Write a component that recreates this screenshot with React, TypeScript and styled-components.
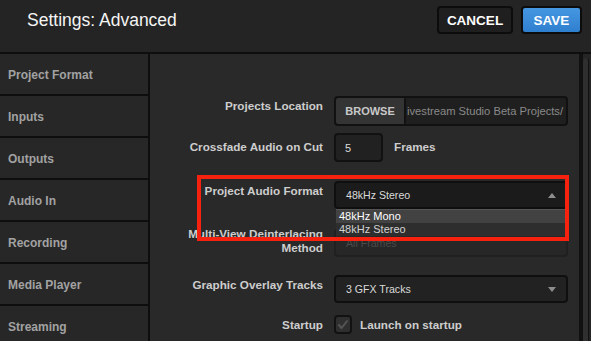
import React from 'react';
import styled, { createGlobalStyle } from 'styled-components';

const Global = createGlobalStyle`
  html, body { margin: 0; padding: 0; background: #282828; }
  body { font-family: "Liberation Sans", Arial, sans-serif; }
  #root { width: 591px; height: 341px; }
`;

const Shell = styled.div`
  position: relative;
  width: 591px;
  height: 341px;
  overflow: hidden;
  background: #282828;
  display: flex;
  flex-direction: column;
`;

const Header = styled.header`
  height: 54px;
  box-sizing: border-box;
  flex-shrink: 0;
  padding: 6px 9px 0 27px;
  background: #242424;
  border-bottom: 2px solid #0e0e0e;
  display: flex;
  align-items: flex-start;
  gap: 8px;
`;

const Title = styled.h1`
  flex: 1;
  margin: 0;
  font-weight: normal;
  font-size: 17.5px;
  line-height: 28px;
  color: #f4f4f4;
`;

const HeaderButton = styled.button<{ $primary?: boolean; $w: number }>`
  width: ${(p) => p.$w}px;
  height: 28px;
  box-sizing: border-box;
  border-radius: 4px;
  border: 2px solid #0c0c0c;
  background: ${(p) => (p.$primary ? 'linear-gradient(#4697e2, #2f7fcf)' : '#1f1f1f')};
  color: #fff;
  font-family: "Liberation Sans", Arial, sans-serif;
  font-weight: bold;
  font-size: 13.5px;
  padding: 0;
`;

const Body = styled.div`
  flex: 1;
  display: flex;
  min-height: 0;
`;

const Sidebar = styled.nav`
  width: 148px;
  flex-shrink: 0;
  border-right: 2px solid #0e0e0e;
  background: #0e0e0e;
  display: flex;
  flex-direction: column;
  gap: 2px;
`;

const NavItem = styled.div`
  height: 40px;
  box-sizing: border-box;
  flex-shrink: 0;
  background: #272727;
  padding: 2px 0 0 8px;
  display: flex;
  align-items: center;
  font-weight: bold;
  font-size: 12px;
  color: #a2a2a2;
`;

const Main = styled.main`
  flex: 1;
  position: relative;
  display: flex;
  flex-direction: column;
  background: #292929;
`;

const Gutter = styled.div`
  width: 8px;
  flex-shrink: 0;
  border-left: 4px solid #111;
  background: #252525;
  padding-top: 4px;
  display: flex;
  justify-content: flex-start;
`;

const Track = styled.div`
  width: 5px;
  height: 100%;
  border-radius: 3px 3px 0 0;
  background: #2f2f2f;
  border-right: 1px solid #111;
`;

const Row = styled.div<{ $mt: number }>`
  display: flex;
  align-items: flex-start;
  gap: 11px;
  margin-top: ${(p) => p.$mt}px;
`;

const Label = styled.div<{ $off: number }>`
  width: 173px;
  flex-shrink: 0;
  text-align: right;
  font-weight: bold;
  font-size: 11.7px;
  line-height: 14px;
  color: #cdcdcd;
  margin-top: ${(p) => p.$off}px;
`;

const BrowseGroup = styled.div`
  width: 234px;
  height: 30px;
  box-sizing: border-box;
  display: flex;
  border: 2px solid #111;
  border-radius: 4px;
  overflow: hidden;
  background: #1f1f1f;
`;

const BrowseButton = styled.div`
  width: 70px;
  flex-shrink: 0;
  box-sizing: border-box;
  border-right: 2px solid #111;
  background: #343434;
  display: flex;
  align-items: center;
  justify-content: center;
  font-weight: bold;
  font-size: 11px;
  color: #c9c9c9;
  border-radius: 2px;
`;

const PathText = styled.div`
  flex: 1;
  overflow: hidden;
  display: flex;
  align-items: center;
  padding-left: 1px;
  white-space: nowrap;
  font-size: 11.2px;
  color: #8a8a8a;
`;

const NumberBox = styled.div`
  width: 49px;
  height: 29px;
  box-sizing: border-box;
  border: 2px solid #111;
  border-radius: 4px;
  background: #212121;
  display: flex;
  align-items: center;
  padding-left: 9px;
  font-size: 11px;
  color: #dcdcdc;
`;

const Unit = styled.div`
  font-weight: bold;
  font-size: 11.7px;
  line-height: 14px;
  color: #cdcdcd;
  margin-top: 7px;
`;

const Select = styled.div<{ $disabled?: boolean; $open?: boolean }>`
  position: relative;
  width: 234px;
  height: 28px;
  box-sizing: border-box;
  border: 2px solid ${(p) => (p.$disabled ? '#202020' : '#0f0f0f')};
  border-radius: 4px;
  background: ${(p) => (p.$open ? '#1b1b1b' : p.$disabled ? '#272727' : '#222')};
  display: flex;
  align-items: center;
  padding: 0 10px 0 10px;
  font-size: 10.6px;
  color: ${(p) => (p.$disabled ? '#4b4b4b' : '#dadada')};
`;

const Value = styled.span`
  flex: 1;
`;

const Caret = styled.span<{ $up?: boolean }>`
  width: 0;
  height: 0;
  border-left: 4px solid transparent;
  border-right: 4px solid transparent;
  ${(p) => (p.$up ? 'border-bottom: 5px solid #8d8d8d;' : 'border-top: 5px solid #8d8d8d;')}
`;

const Menu = styled.ul`
  position: absolute;
  z-index: 2;
  left: 0;
  right: 0;
  top: calc(100% + 2px);
  margin: 0;
  padding: 0;
  list-style: none;
  background: #2e2e2e;
  border-top: 1px solid #555;
`;

const MenuItem = styled.li<{ $active?: boolean }>`
  height: 13px;
  line-height: 13px;
  padding-left: 3px;
  font-size: 11px;
  background: ${(p) => (p.$active ? '#424242' : '#2e2e2e')};
  color: ${(p) => (p.$active ? '#fff' : '#d2d2d2')};
`;

const CheckRow = styled.div`
  display: flex;
  align-items: center;
  gap: 8px;
`;

const Checkbox = styled.div`
  width: 18px;
  height: 19px;
  box-sizing: border-box;
  border: 2px solid #121212;
  border-radius: 4px;
  background: #2f2f2f;
  display: flex;
  align-items: center;
  justify-content: center;
`;

const CheckLabel = styled.span`
  font-weight: bold;
  font-size: 11.7px;
  color: #cdcdcd;
`;

const Highlight = styled.div`
  position: absolute;
  z-index: 5;
  left: 197px;
  top: 175px;
  width: 372px;
  height: 66px;
  box-sizing: border-box;
  border: 4px solid #f7210f;
  pointer-events: none;
`;

const navItems = ['Project Format', 'Inputs', 'Outputs', 'Audio In', 'Recording', 'Media Player', 'Streaming'];

export default function App() {
  return (
    <>
      <Global />
      <Shell>
        <Header>
          <Title>Settings: Advanced</Title>
          <HeaderButton $w={76}>CANCEL</HeaderButton>
          <HeaderButton $w={61} $primary>
            SAVE
          </HeaderButton>
        </Header>
        <Body>
          <Sidebar>
            {navItems.map((n) => (
              <NavItem key={n}>{n}</NavItem>
            ))}
          </Sidebar>
          <Main>
            <Row $mt={42}>
              <Label $off={3}>Projects Location</Label>
              <BrowseGroup>
                <BrowseButton>BROWSE</BrowseButton>
                <PathText>ivestream Studio Beta Projects/</PathText>
              </BrowseGroup>
            </Row>
            <Row $mt={7}>
              <Label $off={7}>Crossfade Audio on Cut</Label>
              <NumberBox>5</NumberBox>
              <Unit>Frames</Unit>
            </Row>
            <Row $mt={19}>
              <Label $off={3}>Project Audio Format</Label>
              <Select $open>
                <Value>48kHz Stereo</Value>
                <Caret $up />
                <Menu>
                  <MenuItem $active>48kHz Mono</MenuItem>
                  <MenuItem>48kHz Stereo</MenuItem>
                </Menu>
              </Select>
            </Row>
            <Row $mt={20}>
              <Label $off={-2}>
                Multi-View Deinterlacing
                <br />
                Method
              </Label>
              <Select $disabled>
                <Value>All Frames</Value>
              </Select>
            </Row>
            <Row $mt={18}>
              <Label $off={3}>Graphic Overlay Tracks</Label>
              <Select>
                <Value>3 GFX Tracks</Value>
                <Caret />
              </Select>
            </Row>
            <Row $mt={12}>
              <Label $off={3}>Startup</Label>
              <CheckRow>
                <Checkbox>
                  <svg width="12" height="11" viewBox="0 0 12 11">
                    <path d="M1.5 5.5 L4.5 9 L10.5 1.5" fill="none" stroke="#555" strokeWidth="2" />
                  </svg>
                </Checkbox>
                <CheckLabel>Launch on startup</CheckLabel>
              </CheckRow>
            </Row>
          </Main>
          <Gutter>
            <Track />
          </Gutter>
        </Body>
        <Highlight />
      </Shell>
    </>
  );
}
